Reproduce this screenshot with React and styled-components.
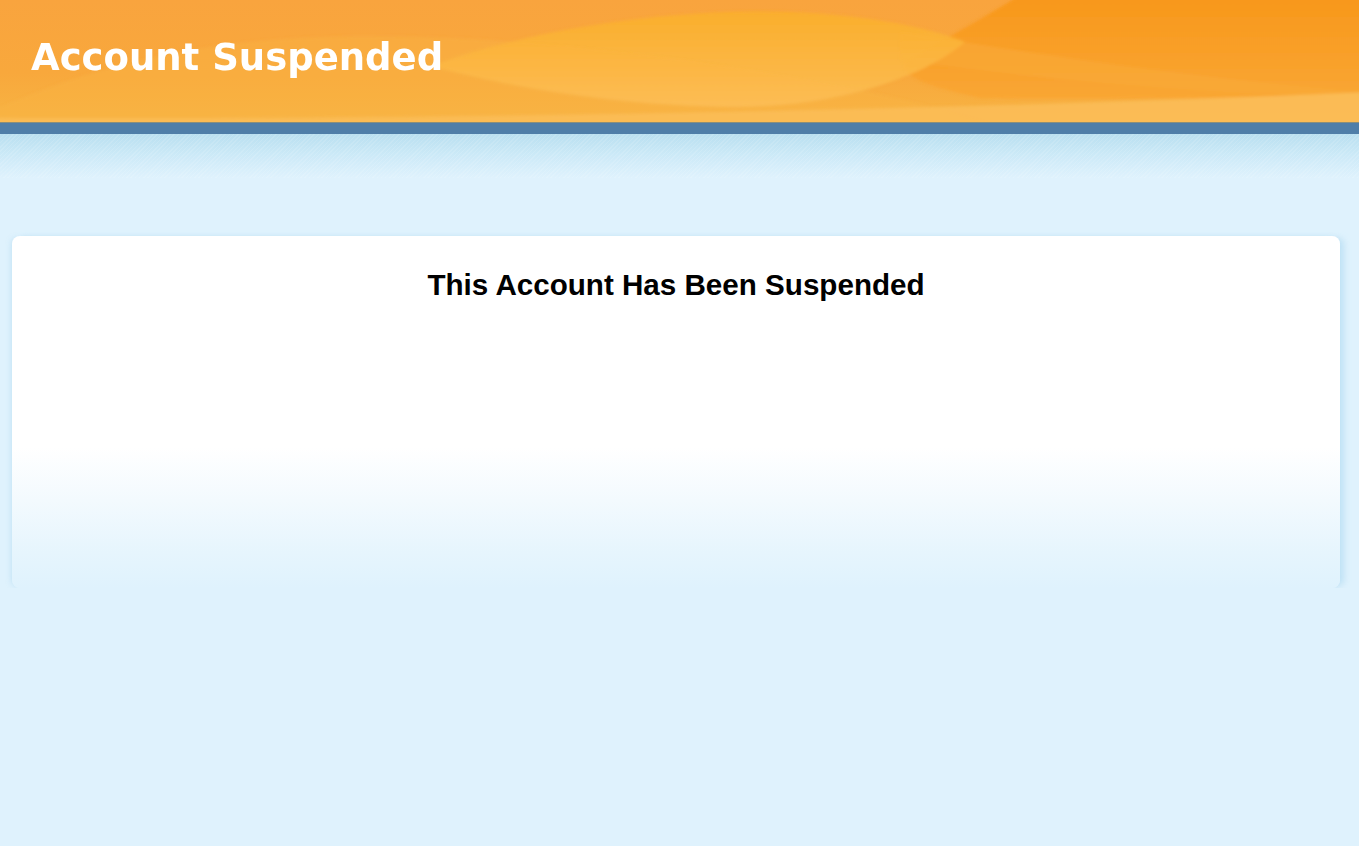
import React from 'react';
import styled, { createGlobalStyle } from 'styled-components';

const GlobalStyle = createGlobalStyle`
    html, body {
        margin: 0;
        padding: 0;
        background: #dff2fd;
        min-height: 100%;
    }
    body {
        font-family: "Liberation Sans", Arial, sans-serif;
    }
`;

const Header = styled.header`
    position: relative;
    height: 122px;
    overflow: hidden;
    background: linear-gradient(180deg, #f9a43e 0%, #f8a83c 60%, #f7b443 100%);
`;

const Waves = styled.svg`
    position: absolute;
    inset: 0;
    width: 100%;
    height: 100%;
`;

const HeaderTitle = styled.h1`
    position: relative;
    margin: 0;
    padding: 36px 0 0 31px;
    font-family: "DejaVu Sans", Verdana, sans-serif;
    font-weight: bold;
    font-size: 37px;
    line-height: 44px;
    color: #ffffff;
`;

const Strip = styled.div`
    height: 12px;
    background: #4f7ea8;
    border-top: 1px solid #8a8f7c;
    box-sizing: border-box;
`;

const Fade = styled.div`
    height: 44px;
    background:
        repeating-linear-gradient(135deg, rgba(255, 255, 255, 0.12) 0 1px, transparent 1px 3px),
        linear-gradient(180deg, #b9dff0 0%, #cbe9f7 45%, #dff2fd 100%);
`;

const Main = styled.main`
    padding: 58px 19px 0 12px;
`;

const Card = styled.section`
    height: 352px;
    border-radius: 8px;
    background: linear-gradient(180deg, #ffffff 0%, #ffffff 60%, #f3fafe 75%, #e6f5fd 90%, #dff2fd 100%);
    box-shadow: 6px 0 6px -2px rgba(170, 215, 240, 0.6), -3px 0 5px -2px rgba(170, 215, 240, 0.5);
    padding-top: 33px;
    box-sizing: border-box;
`;

const Heading = styled.h2`
    margin: 0;
    text-align: center;
    font-family: "Liberation Sans", Arial, sans-serif;
    font-weight: bold;
    font-size: 29.6px;
    line-height: 32px;
    color: #000000;
`;

const HeaderWaves = () => (
    <Waves viewBox="0 0 1359 122" preserveAspectRatio="none">
        <defs>
            <linearGradient id="lens" x1="0" y1="0" x2="0" y2="1">
                <stop offset="0" stopColor="#fbb02a" />
                <stop offset="1" stopColor="#fcbf58" />
            </linearGradient>
            <linearGradient id="rightGlow" x1="0" y1="0" x2="0" y2="1">
                <stop offset="0" stopColor="#f8971a" />
                <stop offset="1" stopColor="#f9a634" />
            </linearGradient>
            <filter id="soft" x="-5%" y="-20%" width="110%" height="140%">
                <feGaussianBlur stdDeviation="1.5" />
            </filter>
        </defs>
        <g filter="url(#soft)">
            <path d="M-10 130 L-10 112 C60 80 160 45 300 38 C420 32 560 42 700 62 C820 80 920 100 1010 130 Z" fill="#fab347" opacity="0.4" />
            <path d="M1020 -5 L1370 -5 L1370 96 C1200 98 1060 100 980 98 C930 88 900 75 905 64 C940 40 990 15 1020 -5 Z" fill="url(#rightGlow)" />
            <path d="M900 32 C1050 55 1200 80 1370 92 L1370 97 C1200 94 1050 80 900 60 Z" fill="#f9ab3a" opacity="0.5" />
            <path d="M430 66 C540 26 680 8 790 12 C870 15 930 28 965 42 C920 80 830 108 730 107 C620 105 520 90 430 66 Z" fill="url(#lens)" opacity="0.85" />
            <path d="M-10 130 L-10 118 C400 120 900 112 1370 92 L1370 130 Z" fill="#fbbd58" opacity="0.9" />
        </g>
    </Waves>
);

export default function App() {
    return (
        <>
            <GlobalStyle />
            <Header>
                <HeaderWaves />
                <HeaderTitle>Account Suspended</HeaderTitle>
            </Header>
            <Strip />
            <Fade />
            <Main>
                <Card>
                    <Heading>This Account Has Been Suspended</Heading>
                </Card>
            </Main>
        </>
    );
}
